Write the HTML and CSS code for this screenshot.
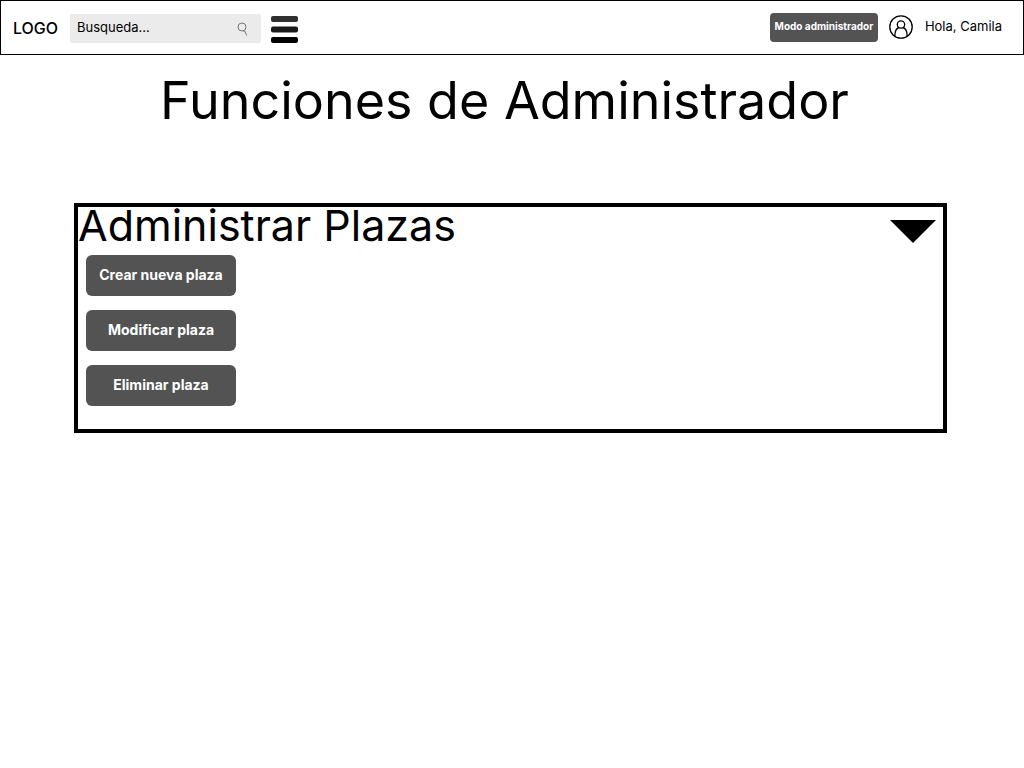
FILE: index.html
```html
<!DOCTYPE html>
<html lang="es">
<head>
<meta charset="utf-8">
<meta name="viewport" content="width=device-width, initial-scale=1">
<title>Funciones de Administrador</title>
<link rel="stylesheet" href="styles.css">
</head>
<body>
<header class="topbar">
  <a class="logo" href="#">LOGO</a>
  <form class="search" role="search">
    <input class="search-input" type="text" placeholder="Busqueda..." aria-label="Busqueda">
    <button class="icon-button" type="button" aria-label="Buscar">
      <svg width="12" height="14" viewBox="0 0 12 14" fill="none" stroke="#777" stroke-width="1"><circle cx="5" cy="5" r="4"/><path d="M6.500 8.800l.7 1 .9-.4L9.600 13.500"/></svg>
    </button>
  </form>
  <button class="icon-button" type="button" aria-label="Menú">
    <svg width="28" height="28" viewBox="0 0 28 28"><rect x="1" y="1" width="27" height="6" rx="2" fill="#303030"/><rect x="1" y="11.500" width="27" height="6" rx="2" fill="#1a1a1a"/><rect x="1" y="22" width="27" height="6" rx="2" fill="#030303"/></svg>
  </button>
  <div class="account">
    <button class="button button-small" type="button">Modo administrador</button>
    <svg class="avatar" width="24" height="24" viewBox="0 0 24 24" fill="none" stroke="#000" stroke-width="1.300"><circle cx="12" cy="12" r="11.200"/><circle cx="12" cy="9.500" r="3.700"/><path d="M5.800 21.200c0-4.800 1.700-8 4.300-8.700M18.200 21.200c0-4.800-1.700-8-4.300-8.700"/></svg>
    <span class="greeting">Hola, Camila</span>
  </div>
</header>
<main class="content">
  <h1 class="title">Funciones de Administrador</h1>
  <section class="panel">
    <div class="panel-head">
      <h2 class="panel-title">Administrar Plazas</h2>
      <button class="icon-button" type="button" aria-label="Contraer" aria-expanded="true">
        <svg width="46" height="23" viewBox="0 0 46 23"><path d="M0 0h46L23 23z"/></svg>
      </button>
    </div>
    <div class="actions">
      <button class="button" type="button">Crear nueva plaza</button>
      <button class="button" type="button">Modificar plaza</button>
      <button class="button" type="button">Eliminar plaza</button>
    </div>
  </section>
</main>
</body>
</html>
```
FILE: styles.css
```css
* {
  box-sizing: border-box;
}

body {
  margin: 0;
  background: #fff;
  color: #000;
  font-family: Inter, "Liberation Sans", sans-serif;
  font-size: 13px;
}

.topbar {
  display: flex;
  align-items: center;
  min-height: 55px;
  padding: 2px 21px 0 12px;
  border: 1px solid #000;
}

.logo {
  width: 57px;
  color: #000;
  font-size: 16px;
  font-weight: 500;
  padding-bottom: 2px;
  text-decoration: none;
}

.search {
  display: flex;
  align-items: center;
  width: 191px;
  height: 29px;
  margin-right: 9px;
  padding: 0 12px 0 7px;
  border-radius: 2px;
  background: #ebebeb;
}

.search-input {
  flex: 1;
  min-width: 0;
  padding: 0 0 3px;
  border: 0;
  background: none;
  font: inherit;
}

.search-input::placeholder {
  color: #000;
  opacity: 1;
}

.icon-button {
  flex: none;
  padding: 0;
  border: 0;
  background: none;
  cursor: pointer;
}

.icon-button svg {
  display: block;
}

.account {
  display: flex;
  align-items: center;
  margin-left: auto;
  padding-bottom: 3px;
}

.avatar {
  margin: 0 12px 0 11px;
}

.greeting {
  padding-bottom: 3px;
}

.button {
  min-height: 41px;
  padding: 0 4px 2px;
  border: 0;
  border-radius: 6px;
  background: #535353;
  color: #fff;
  font: inherit;
  font-size: 14px;
  font-weight: 700;
  white-space: nowrap;
  cursor: pointer;
}

.button-small {
  width: 108px;
  min-height: 29px;
  border-radius: 4px;
  font-size: 10px;
}

.content {
  padding: 14px 77px 0 74px;
}

.title {
  margin: 0 0 70px;
  padding-right: 12px;
  font-size: 52px;
  font-weight: 400;
  line-height: 64px;
  text-align: center;
}

.panel {
  padding-bottom: 23px;
  border: 4px solid #000;
}

.panel-head {
  display: flex;
  align-items: center;
  justify-content: space-between;
  height: 48px;
  padding-right: 7px;
}

.panel-title {
  margin: 0;
  padding-bottom: 12px;
  font-size: 43px;
  font-weight: 400;
  line-height: 36px;
}

.actions {
  display: grid;
  grid-template-columns: 150px;
  gap: 14px;
  padding-left: 8px;
}
```
